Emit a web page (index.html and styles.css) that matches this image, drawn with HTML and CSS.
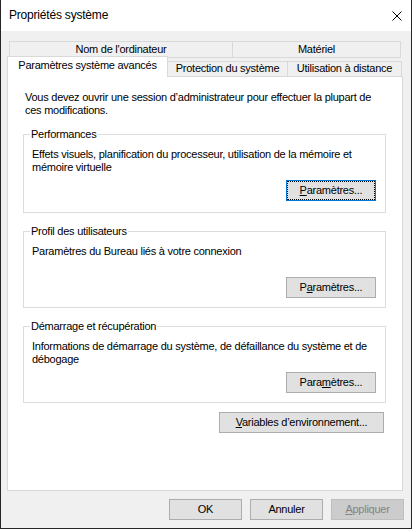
FILE: index.html
```html
<!DOCTYPE html>
<html lang="fr">
<head>
    <meta charset="UTF-8">
    <meta name="viewport" content="width=device-width, initial-scale=1.0">
    <title>Propriétés système</title>
    <link rel="stylesheet" href="styles.css">
</head>
<body>

    <div class="window">
        <div class="titlebar">
            <span class="title">Propriétés système</span>
            <svg class="close" width="10" height="10" viewBox="0 0 10 10">
                <path d="M0.5 0.5 L9.5 9.5 M9.5 0.5 L0.5 9.5" stroke="#000" stroke-width="1" fill="none"/>
            </svg>
        </div>

        <div class="dialog">
            <!-- two rows of tabs, the selected one sits on the panel -->
            <div class="tab-row back">
                <div class="tab tab-computer">Nom de l'ordinateur</div>
                <div class="tab tab-hardware">Matériel</div>
            </div>
            <div class="tab-row front">
                <div class="tab selected tab-advanced">Paramètres système avancés</div>
                <div class="tab tab-protection">Protection du système</div>
                <div class="tab tab-remote">Utilisation à distance</div>
            </div>

            <div class="panel">
                <p class="intro">Vous devez ouvrir une session d’administrateur pour effectuer la plupart de ces modifications.</p>

                <fieldset class="group tall">
                    <legend>Performances</legend>
                    <p class="group-text">Effets visuels, planification du processeur, utilisation de la mémoire et mémoire virtuelle</p>
                    <div class="group-actions">
                        <button class="btn btn-settings focused"><u>P</u>aramètres...</button>
                    </div>
                </fieldset>

                <fieldset class="group">
                    <legend>Profil des utilisateurs</legend>
                    <p class="group-text">Paramètres du Bureau liés à votre connexion</p>
                    <div class="group-actions">
                        <button class="btn btn-settings">P<u>a</u>ramètres...</button>
                    </div>
                </fieldset>

                <fieldset class="group">
                    <legend>Démarrage et récupération</legend>
                    <p class="group-text">Informations de démarrage du système, de défaillance du système et de débogage</p>
                    <div class="group-actions">
                        <button class="btn btn-settings">Para<u>m</u>ètres...</button>
                    </div>
                </fieldset>

                <div class="env-row">
                    <button class="btn btn-env"><u>V</u>ariables d’environnement...</button>
                </div>
            </div>

            <div class="footer">
                <button class="btn btn-dialog">OK</button>
                <button class="btn btn-dialog">Annuler</button>
                <button class="btn btn-dialog" disabled><u>A</u>ppliquer</button>
            </div>
        </div>
    </div>

</body>
</html>
```

FILE: styles.css
```css
* {
    box-sizing: border-box;
}
body {
    margin: 0;
    font-family: "Liberation Sans", Arial, sans-serif;
    font-size: 11px;
    letter-spacing: -0.25px;
    color: #000;
    background-color: #f0f0f0;
}
.window {
    width: 412px;
    height: 529px;
    border: 1px solid #262626;
    border-top: none;
    background-color: #f0f0f0;
    display: flex;
    flex-direction: column;
}
.titlebar {
    flex: none;
    height: 31px;
    background-color: #fff;
    display: flex;
    align-items: center;
    justify-content: space-between;
    padding: 0 9px 0 8px;
}
.title {
    font-size: 12px;
    line-height: 15px;
    letter-spacing: -0.2px;
}
.close {
    display: block;
}
.dialog {
    flex: 1;
    padding: 10px 8px 0 6px;
}

/* tabs */
.tab-row {
    display: flex;
}
.tab-row.back {
    margin-left: 2px;
}
.tab-row.front {
    margin-top: -2px;
    height: 20px;
    align-items: flex-end;
}
.tab {
    border: 1px solid #d9d9d9;
    background-color: #f0f0f0;
    text-align: center;
    line-height: 13px;
    white-space: nowrap;
}
.tab + .tab {
    margin-left: -1px;
}
.back .tab {
    height: 17px;
    padding-top: 1px;
}
.front .tab {
    height: 15px;
    border-bottom: none;
}
.front .tab.selected {
    height: 21px;
    margin-bottom: -1px;
    padding-top: 2px;
    background-color: #fff;
    position: relative;
    z-index: 1;
}
.tab-computer { width: 224px; }
.tab-hardware { width: 169px; }
.tab-advanced { width: 161px; }
.tab-protection { width: 121px; }
.tab-remote { width: 115px; }

/* tab page */
.panel {
    height: 415px;
    border: 1px solid #d9d9d9;
    background-color: #fff;
    padding: 14px 16px 0 15px;
}
.intro {
    margin: 0 0 0 2px;
    width: 358px;
    line-height: 13px;
}
.group {
    margin: 11px 0 0;
    padding: 0 9px 9px 8px;
    border: 1px solid #dcdcdc;
    min-width: 0;
}
.group.tall {
    padding-bottom: 11px;
}
.group + .group {
    margin-top: 12px;
}
.group legend {
    padding: 0 1px;
    margin-left: -2px;
    line-height: 13px;
}
.group-text {
    margin: 7px 0 0;
    min-height: 26px;
    line-height: 13px;
}
.group-actions {
    display: flex;
    justify-content: flex-end;
    margin-top: 6px;
}
.env-row {
    display: flex;
    justify-content: flex-end;
    margin-top: 9px;
    padding-right: 2px;
}

/* buttons */
.btn {
    height: 21px;
    padding: 0;
    border: 1px solid #adadad;
    background-color: #e1e1e1;
    font: inherit;
    letter-spacing: inherit;
    line-height: 19px;
    color: #000;
}
.btn.focused {
    border-color: #0078d7;
    outline: 1px dotted #000;
    outline-offset: -2px;
}
.btn:disabled {
    background-color: #cccccc;
    border-color: #bfbfbf;
    color: #838383;
}
.btn-settings { width: 90px; }
.btn-env { width: 165px; }
.btn-dialog { width: 73px; }
.footer {
    display: flex;
    justify-content: flex-end;
    gap: 8px;
    margin-top: 8px;
    margin-right: -1px;
}
```
